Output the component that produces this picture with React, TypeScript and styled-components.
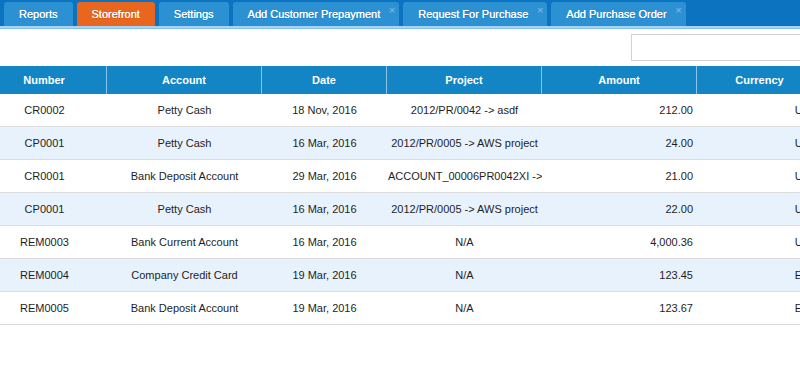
import React from 'react';
import styled, { createGlobalStyle } from 'styled-components';

const GlobalStyle = createGlobalStyle`
  html, body { margin: 0; padding: 0; background: #fff; overflow: hidden; }
  body { font-family: "Liberation Sans", Arial, sans-serif; font-size: 11px; color: #222; }
`;

interface TabItem {
  label: string;
  active?: boolean;
  closable?: boolean;
}

interface Row {
  number: string;
  account: string;
  date: string;
  project: string;
  amount: string;
  currency: string;
}

const tabs: TabItem[] = [
  { label: 'Reports' },
  { label: 'Storefront', active: true },
  { label: 'Settings' },
  { label: 'Add Customer Prepayment', closable: true },
  { label: 'Request For Purchase', closable: true },
  { label: 'Add Purchase Order', closable: true },
];

const rows: Row[] = [
  { number: 'CR0002', account: 'Petty Cash', date: '18 Nov, 2016', project: '2012/PR/0042 -> asdf', amount: '212.00', currency: 'USD' },
  { number: 'CP0001', account: 'Petty Cash', date: '16 Mar, 2016', project: '2012/PR/0005 -> AWS project', amount: '24.00', currency: 'USD' },
  { number: 'CR0001', account: 'Bank Deposit Account', date: '29 Mar, 2016', project: 'ACCOUNT_00006PR0042XI ->', amount: '21.00', currency: 'USD' },
  { number: 'CP0001', account: 'Petty Cash', date: '16 Mar, 2016', project: '2012/PR/0005 -> AWS project', amount: '22.00', currency: 'USD' },
  { number: 'REM0003', account: 'Bank Current Account', date: '16 Mar, 2016', project: 'N/A', amount: '4,000.36', currency: 'USD' },
  { number: 'REM0004', account: 'Company Credit Card', date: '19 Mar, 2016', project: 'N/A', amount: '123.45', currency: 'EUR' },
  { number: 'REM0005', account: 'Bank Deposit Account', date: '19 Mar, 2016', project: 'N/A', amount: '123.67', currency: 'EUR' },
];

const columns = [
  { title: 'Number', width: 107 },
  { title: 'Account', width: 155 },
  { title: 'Date', width: 125 },
  { title: 'Project', width: 155 },
  { title: 'Amount', width: 155 },
  { title: 'Currency', width: 125 },
];

const Page = styled.div`
  width: 822px;
`;

const TabBar = styled.nav`
  position: relative;
  display: flex;
  align-items: flex-end;
  gap: 4px;
  height: 26px;
  padding-left: 4px;
  background: #0b73bf;
  border-bottom: 3px solid #a7d4f4;
  &::after {
    content: '';
    position: absolute;
    left: 0;
    right: 0;
    bottom: -3px;
    height: 1px;
    background: #86c2ee;
  }
`;

const Tab = styled.div<{ $active?: boolean; $closable?: boolean }>`
  position: relative;
  height: 24px;
  line-height: 24px;
  padding: 0 ${p => (p.$closable ? '19px' : '15px')} 0 15px;
  border-radius: 3px 3px 0 0;
  background: ${p => (p.$active ? '#e8661d' : '#2c91d3')};
  color: #fff;
  font-size: 11px;
  white-space: nowrap;
  text-shadow: 0 0 0.6px #fff, 0 1px 0 rgba(0, 0, 0, 0.15);
`;

const Close = styled.span`
  position: absolute;
  top: 3px;
  right: 4px;
  line-height: 10px;
  font-size: 11px;
  color: #86bde6;
  text-shadow: none;
`;

const Toolbar = styled.div`
  display: flex;
  justify-content: flex-end;
  padding: 5px 0 5px;
`;

const Search = styled.input`
  width: 191px;
  height: 27px;
  box-sizing: border-box;
  border: 1px solid #d2d2d2;
  outline: none;
  padding: 0 6px;
  font-family: inherit;
`;

const Table = styled.table`
  table-layout: fixed;
  width: 822px;
  border-collapse: separate;
  border-spacing: 0;
`;

const Th = styled.th`
  height: 28px;
  padding: 0 4px;
  background: #1385c4;
  color: #fff;
  font-weight: bold;
  font-size: 11px;
  text-align: center;
  border-right: 1px solid #8dc5ea;
  box-sizing: border-box;
  &:first-child { padding: 0 19px 0 1px; }
  &:last-child { border-right: none; }
`;

const Tr = styled.tr<{ $alt?: boolean }>`
  background: ${p => (p.$alt ? '#e8f2fc' : '#fff')};
`;

const Td = styled.td<{ $align?: 'center' | 'right' }>`
  height: 32px;
  padding: 0 ${p => (p.$align === 'right' ? '4px' : '1px')};
  text-align: ${p => p.$align || 'center'};
  white-space: nowrap;
  overflow: hidden;
  border-bottom: 1px solid #dcdcdc;
  color: #1e1e1e;
  &:first-child { padding: 0 19px 0 1px; }
`;

export default function App() {
  return (
    <Page>
      <GlobalStyle />
      <TabBar>
        {tabs.map(t => (
          <Tab key={t.label} $active={t.active} $closable={t.closable}>
            {t.label}
            {t.closable && <Close>×</Close>}
          </Tab>
        ))}
      </TabBar>
      <Toolbar>
        <Search type="text" />
      </Toolbar>
      <Table>
        <colgroup>
          {columns.map(c => (
            <col key={c.title} style={{ width: c.width }} />
          ))}
        </colgroup>
        <thead>
          <tr>
            {columns.map(c => (
              <Th key={c.title}>{c.title}</Th>
            ))}
          </tr>
        </thead>
        <tbody>
          {rows.map((r, i) => (
            <Tr key={i} $alt={i % 2 === 1}>
              <Td>{r.number}</Td>
              <Td>{r.account}</Td>
              <Td>{r.date}</Td>
              <Td>{r.project}</Td>
              <Td $align="right">{r.amount}</Td>
              <Td $align="right">{r.currency}</Td>
            </Tr>
          ))}
        </tbody>
      </Table>
    </Page>
  );
}
